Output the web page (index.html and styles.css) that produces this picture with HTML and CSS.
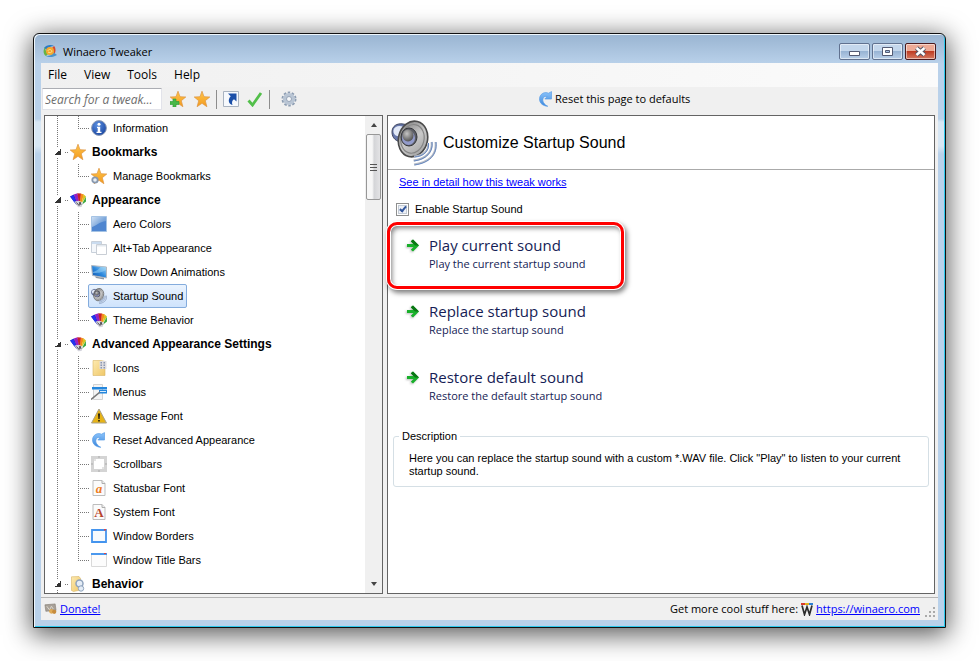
FILE: index.html
```html
<!DOCTYPE html>
<html lang="en">
<head>
  <meta charset="utf-8">
  <meta name="viewport" content="width=device-width, initial-scale=1">
  <title>Winaero Tweaker</title>
  <link rel="stylesheet" href="styles.css">
</head>
<body>

<!-- icon sprite -->
<svg class="sprite" width="0" height="0" aria-hidden="true">
  <defs>
    <linearGradient id="g-blue" x1="0" y1="0" x2="1" y2="1"><stop offset="0" stop-color="#d3e3f5"/><stop offset=".5" stop-color="#7fa9dc"/><stop offset="1" stop-color="#4a7fc8"/></linearGradient>
    <linearGradient id="g-star" x1="0" y1="0" x2="0" y2="1"><stop offset="0" stop-color="#ffc64a"/><stop offset="1" stop-color="#f39a1e"/></linearGradient>
    <radialGradient id="g-info" cx=".4" cy=".3" r=".8"><stop offset="0" stop-color="#5b8fe0"/><stop offset="1" stop-color="#123f9c"/></radialGradient>
    <linearGradient id="g-metal" x1="0" y1="0" x2="1" y2="1"><stop offset="0" stop-color="#777"/><stop offset=".5" stop-color="#c9c9c9"/><stop offset="1" stop-color="#9a9a9a"/></linearGradient>
    <radialGradient id="g-cone" cx=".4" cy=".35" r=".7"><stop offset="0" stop-color="#c5c5c5"/><stop offset="1" stop-color="#4d4d4d"/></radialGradient>
    <linearGradient id="g-arc" x1="0" y1="0" x2="0" y2="1"><stop offset="0" stop-color="#8cc4fb"/><stop offset="1" stop-color="#3a86dc"/></linearGradient>
    <linearGradient id="g-folder" x1="0" y1="0" x2="1" y2="1"><stop offset="0" stop-color="#fdeab0"/><stop offset="1" stop-color="#efc768"/></linearGradient>
    <linearGradient id="g-screen" x1="0" y1="1" x2="1" y2="0"><stop offset="0" stop-color="#0c4fa8"/><stop offset=".5" stop-color="#2e8ade"/><stop offset="1" stop-color="#b8e2f8"/></linearGradient>
  </defs>
  <symbol id="i-app" viewBox="0 0 16 14">
    <path d="M2 4C4 1 9 0 12 2c-3 0-6 1-7 4z" fill="#2c7cc4"/>
    <path d="M12 2c2 2 2 6 0 9 0-3-1-5-3-6z" fill="#d9482e"/>
    <path d="M15 11c-3 2-8 3-11 1 4 0 6-1 7-4z" fill="#4b93c9"/>
    <path d="M4 12C1 10 1 6 3 3c0 3 1 5 4 6z" fill="#66b345"/>
    <circle cx="8" cy="7" r="4" fill="#f4a72c"/>
    <path d="M6 7c0-2 3-2 4 0M10 7c0 2-3 2-4 1" fill="none" stroke="#fbe08c"/>
  </symbol>
  <symbol id="i-star" viewBox="0 0 16 16">
    <path d="M8 .2l2 5.500 5.800.3-4.500 3.700 1.600 6L8 12.300l-4.900 3.400 1.600-6L.2 6l5.800-.3z" fill="url(#g-star)" stroke="#dd9440" stroke-width=".7"/>
  </symbol>
  <symbol id="i-staradd" viewBox="0 0 16 16">
    <use href="#i-star"/>
    <path d="M3 8h3v2.500h3v3H6V16H3v-2.500H0v-3h3z" fill="#48b848" stroke="#2b9a35" stroke-width=".6"/>
  </symbol>
  <symbol id="i-stargear" viewBox="0 0 16 16">
    <use href="#i-star"/>
    <circle cx="4" cy="12" r="2.700" fill="#e8eef5" stroke="#8798ae" stroke-width="1.800"/>
  </symbol>
  <symbol id="i-shortcut" viewBox="0 0 16 16">
    <path d="M.5.5h15v15H.5z" fill="#f6f9fd" stroke="#a9b3c0"/>
    <path d="M5 2.500h8.500v8L11 8.200C9 9.500 8.500 11.500 9.500 14 5.500 13 4.500 8.500 7.700 5.200z" fill="#1b4fa8"/>
  </symbol>
  <symbol id="i-check" viewBox="0 0 16 16">
    <path d="M1.500 9.500L5.500 14 14 2" fill="none" stroke="#52bf4a" stroke-width="2.800"/>
  </symbol>
  <symbol id="i-gear" viewBox="0 0 16 16">
    <circle cx="8" cy="8" r="6.500" fill="none" stroke="#8d9db2" stroke-width="2" stroke-dasharray="2.500 1.580"/>
    <circle cx="8" cy="8" r="4.300" fill="none" stroke="#b9c5d4" stroke-width="3.600"/>
    <circle cx="8" cy="8" r="2.500" fill="#f6f8fa" stroke="#8292a8" stroke-width=".8"/>
  </symbol>
  <symbol id="i-reset" viewBox="0 0 16 16">
    <path d="M9.800 15.300C3.500 15 .5 10.500 1.800 6 3 2.300 7 .6 10.500 2.200L13.500.6V8H6.800l2.300-2.400C7 5 5.300 6 4.900 8c-.5 2.500 1 5.300 4.900 7.300z" fill="url(#g-arc)" stroke="#5a9de6" stroke-width=".7"/>
  </symbol>
  <symbol id="i-info" viewBox="0 0 16 16">
    <circle cx="8" cy="8" r="7.400" fill="url(#g-info)" stroke="#8f9cb5"/>
    <circle cx="8" cy="4.200" r="1.500" fill="#fff"/>
    <path d="M6 6.700h3.200v5H10.500V13h-5v-1.300h1.200V8H6z" fill="#fff"/>
  </symbol>
  <symbol id="i-swatch" viewBox="0 0 16 16">
    <path d="M0 4.500L4 2.500 8 12 6.500 13z" fill="#1420b0"/>
    <path d="M.3 4.500L3.500 3l2.500 5-1.500 2.500z" fill="#2233f0"/>
    <path d="M3.800 2.600L7.500 1.200l2 9.800-2 1.200z" fill="#9420c4"/>
    <path d="M7.300 1.200L11 1.500 10.500 11H9z" fill="#c9202c"/>
    <path d="M10.800 1.500l3 1L11.500 11H10z" fill="#f58b1c"/>
    <path d="M13.500 2.300L16 4.500l-4.500 7z" fill="#d8c520"/>
    <path d="M15.800 4.700l.2 4.800-4.500 3.500z" fill="#3aa83c"/>
    <path d="M4.500 9.500L9 8.800l4 2L11.500 15 8 15.200z" fill="#d4d4dc"/>
    <path d="M6.500 10.500l2.500 3 1-3.500 1 3" fill="none" stroke="#444" stroke-width=".9"/>
  </symbol>
  <symbol id="i-aero" viewBox="0 0 16 16">
    <path d="M.5.5h15v15H.5z" fill="url(#g-blue)" stroke="#a5c3e4"/>
    <path d="M1 11C5 10 8 6 15 5v10H1z" fill="#4f86d0"/>
  </symbol>
  <symbol id="i-alttab" viewBox="0 0 16 16">
    <path d="M.5 1.500h10v11H.5z" fill="#f4f7fb" stroke="#c8d0da"/><path d="M1 2h9v2H1z" fill="#cadcf0"/>
    <path d="M5.500 4.500h10v10h-10z" fill="#fff" stroke="#c9ced5"/><path d="M6 5h9v1.500H6z" fill="#e3e9ef"/>
  </symbol>
  <symbol id="i-screen" viewBox="0 0 16 16">
    <path d="M.5 1.500L15.500 3v11L1.500 11.500z" fill="url(#g-screen)" stroke="#b4b9c0"/>
    <path d="M4 12.500l9 1.500v1.500l-8-1.500z" fill="#8c96a2"/><path d="M2 8c4-1 7-4 8-5.500l5 .8V6C10 9 6 9 2 9z" fill="#9fd8f7" opacity=".5"/>
  </symbol>
  <symbol id="i-speaker" viewBox="0 0 46 46">
    <path d="M1 12C1 6 6 3 12 4l6 1-6 17C5 22 1 18 1 12z" fill="#6878ab" stroke="#3e4660"/>
    <path d="M2.500 10C4 6 8 5 13 7l-4 9C5 17 2 14 2.500 10z" fill="#e2e9f7"/>
    <ellipse cx="22" cy="19" rx="14.500" ry="18" fill="url(#g-metal)" stroke="#4a4a4a" stroke-width="1.600" transform="rotate(14 22 19)"/>
    <ellipse cx="21.500" cy="19" rx="11.500" ry="14.500" fill="none" stroke="#858585" stroke-width="1.200" transform="rotate(14 22 19)"/>
    <ellipse cx="18" cy="17" rx="8" ry="9" fill="#5d5f66" stroke="#33353b"/>
    <ellipse cx="17.500" cy="18" rx="6.500" ry="7" fill="#929bcb"/>
    <ellipse cx="17" cy="15.500" rx="5.500" ry="6" fill="url(#g-cone)"/>
    <path d="M37 23c1 8-5 13-14 13.500M40.500 22c1.500 10-6 17-18 18.500M44.500 22c1.500 13-7 20.500-21.500 22.500" fill="none" stroke="#b5bac4" stroke-width="2"/>
    <path d="M37.500 23c1 8-5 13.500-14 14M41 22c1.500 10-6 17.500-18 19M45 22c1.500 13-7 21-21.500 23" fill="none" stroke="#5a80c0" stroke-width=".9"/>
  </symbol>
  <symbol id="i-icons" viewBox="0 0 16 16">
    <path d="M2 .5h8l4 1v14H2z" fill="url(#g-folder)" stroke="#d8b566" stroke-width=".6"/>
    <path d="M8.500 1h7v8h-7z" fill="#dfdde0"/><path d="M9.500 2h1.500v1.500H9.500zM12.500 2H14v1.500h-1.500zM9.500 4.500h1.500V6H9.500zM12.500 4.500H14V6h-1.500zM9.500 7h1.500v1.500H9.500zM12.500 7H14v1.500h-1.500z" fill="#8a97b0"/>
  </symbol>
  <symbol id="i-menus" viewBox="0 0 16 16">
    <path d="M2.500.5h9v15h-9z" fill="#f4f4f4" stroke="#d3d3d3"/>
    <path d="M1 3h15v2.500H1zM8 6h8v3.500H8z" fill="#2587dd"/><path d="M9 7.500h6" stroke="#d8ebfb"/><path d="M0 15.500L9 8" stroke="#777" stroke-width="1.600"/>
  </symbol>
  <symbol id="i-warn" viewBox="0 0 16 16">
    <path d="M8 1L15.500 15H.5z" fill="#e6b317" stroke="#a8a08a" stroke-linejoin="round"/>
    <path d="M7 5.500h2L8.600 11H7.400zM7.200 12h1.600v1.600H7.200z" fill="#201c10"/>
  </symbol>
  <symbol id="i-scroll" viewBox="0 0 16 16">
    <path d="M1.500 1.500h13v13h-13z" fill="#fff" stroke="#d4d4d4" stroke-width="3"/>
    <path d="M3 3h2v2H3zM11 11h2v2h-2z" fill="#e3e3e3"/>
    <path d="M1 7v2M15 7v2M7 1h2M7 15h2" stroke="#aaa" fill="none"/>
  </symbol>
  <symbol id="i-page" viewBox="0 0 16 16">
    <path d="M2 .5h9l3 3v12H2z" fill="#fbfbfb" stroke="#bdbdbd"/><path d="M11 .5v3h3" fill="#eee" stroke="#adadad"/>
  </symbol>
  <symbol id="i-borders" viewBox="0 0 16 16">
    <path d="M1 2h14v12H1z" fill="#f7fafd" stroke="#4494ee" stroke-width="1.800"/><path d="M13 1h2v1.500h-2z" fill="#d44"/>
  </symbol>
  <symbol id="i-titlebar" viewBox="0 0 16 16">
    <path d="M.5 1.500h15v13H.5z" fill="#fcfcfc" stroke="#d9d9d9"/><path d="M0 1h16v2H0z" fill="#4a98ee"/><path d="M13 1h2v1h-2z" fill="#d44"/>
  </symbol>
  <symbol id="i-behavior" viewBox="0 0 16 16">
    <path d="M1.500.8L9 .5l1.500 2V14l-7 1.500-2-1z" fill="url(#g-folder)" stroke="#d8b566" stroke-width=".6"/>
    <circle cx="9.500" cy="7.500" r="3.500" fill="#e5edf6" stroke="#8fa3bd" stroke-width="1.500"/><circle cx="11" cy="12.500" r="2.700" fill="#e5edf6" stroke="#8fa3bd"/>
  </symbol>
  <symbol id="i-go" viewBox="0 0 14 14">
    <path d="M1 6h6.500L4.800 3.300 7 1.500 13 7.500l-6 6-2.200-1.800L7.500 9H1z" fill="#18b02a"/>
    <path d="M4.800 3.300L7 1.500l6 6H9z" fill="#0a7614"/>
  </symbol>
  <symbol id="i-donate" viewBox="0 0 14 12">
    <path d="M1 1.500l11-1 1 7-11 1z" fill="#a7a097" stroke="#7d766c" stroke-width=".6"/><path d="M3 3l3 4 2-4 2 3" fill="none" stroke="#ded9d0"/>
    <circle cx="8" cy="8.500" r="2.500" fill="#dfaa55"/><circle cx="11" cy="9" r="2.300" fill="#c78c3c"/>
  </symbol>
  <symbol id="i-w" viewBox="0 0 12 13">
    <path d="M0 0h4v2H0z" fill="#d93a2b"/><path d="M4 0h4v2H4z" fill="#e9b51b"/><path d="M8 0h4v2H8z" fill="#2a7fd3"/>
    <path d="M1 2.500l2.500 9L6 4l2.500 7.500 2.500-9" fill="none" stroke="#2c2c2c" stroke-width="1.700"/>
  </symbol>
</svg>

<div class="window">
  <header class="titlebar">
    <svg class="app-icon"><use href="#i-app"/></svg>
    <span class="caption">Winaero Tweaker</span>
    <button class="win-btn" type="button" aria-label="Minimize"><svg viewBox="0 0 29 15"><path d="M9.500 7.500h10v4h-10z" fill="#fff" stroke="#535a73"/></svg></button>
    <button class="win-btn" type="button" aria-label="Maximize"><svg viewBox="0 0 29 15"><path d="M9.500 3.500h10v8h-10z" fill="#fff" stroke="#535a73"/><path d="M12.500 6.500h4v2h-4z" fill="#a5c0df" stroke="#535a73"/></svg></button>
    <button class="win-btn close" type="button" aria-label="Close"><svg viewBox="0 0 29 15"><path d="M10.500 4l8 7M18.500 4l-8 7" stroke="#535666" stroke-width="4.500"/><path d="M10.500 4l8 7M18.500 4l-8 7" stroke="#fff" stroke-width="2.500"/></svg></button>
  </header>

  <div class="client">
    <nav class="menubar">
      <button type="button">File</button>
      <button type="button">View</button>
      <button type="button">Tools</button>
      <button type="button">Help</button>
    </nav>

    <div class="toolbar">
      <div class="tools">
        <input class="search" type="text" placeholder="Search for a tweak..." aria-label="Search for a tweak">
        <button type="button" aria-label="Add bookmark"><svg><use href="#i-staradd"/></svg></button>
        <button type="button" aria-label="Bookmarks"><svg><use href="#i-star"/></svg></button>
        <span class="sep"></span>
        <button type="button" aria-label="Create shortcut"><svg><use href="#i-shortcut"/></svg></button>
        <button type="button" aria-label="Apply"><svg><use href="#i-check"/></svg></button>
        <span class="sep"></span>
        <button class="options" type="button" aria-label="Options"><svg><use href="#i-gear"/></svg></button>
      </div>
      <button class="reset" type="button"><svg><use href="#i-reset"/></svg>Reset this page to defaults</button>
    </div>

    <div class="main">
      <div class="tree-pane">
        <ul class="tree" role="tree">
          <li>
            <ul>
              <li><a class="node"><svg><use href="#i-info"/></svg>Information</a></li>
            </ul>
          </li>
          <li>
            <div class="group"><span class="expander"></span><svg><use href="#i-star"/></svg>Bookmarks</div>
            <ul>
              <li><a class="node"><svg><use href="#i-stargear"/></svg>Manage Bookmarks</a></li>
            </ul>
          </li>
          <li>
            <div class="group"><span class="expander"></span><svg><use href="#i-swatch"/></svg>Appearance</div>
            <ul>
              <li><a class="node"><svg><use href="#i-aero"/></svg>Aero Colors</a></li>
              <li><a class="node"><svg><use href="#i-alttab"/></svg>Alt+Tab Appearance</a></li>
              <li><a class="node"><svg><use href="#i-screen"/></svg>Slow Down Animations</a></li>
              <li><a class="node selected"><svg><use href="#i-speaker"/></svg>Startup Sound</a></li>
              <li><a class="node"><svg><use href="#i-swatch"/></svg>Theme Behavior</a></li>
            </ul>
          </li>
          <li>
            <div class="group"><span class="expander"></span><svg><use href="#i-swatch"/></svg>Advanced Appearance Settings</div>
            <ul>
              <li><a class="node"><svg><use href="#i-icons"/></svg>Icons</a></li>
              <li><a class="node"><svg><use href="#i-menus"/></svg>Menus</a></li>
              <li><a class="node"><svg><use href="#i-warn"/></svg>Message Font</a></li>
              <li><a class="node"><svg><use href="#i-reset"/></svg>Reset Advanced Appearance</a></li>
              <li><a class="node"><svg><use href="#i-scroll"/></svg>Scrollbars</a></li>
              <li><a class="node"><svg viewBox="0 0 16 16"><use href="#i-page"/><text class="letter italic" x="8" y="13" text-anchor="middle">a</text></svg>Statusbar Font</a></li>
              <li><a class="node"><svg viewBox="0 0 16 16"><use href="#i-page"/><text class="letter" x="8" y="13" text-anchor="middle">A</text></svg>System Font</a></li>
              <li><a class="node"><svg><use href="#i-borders"/></svg>Window Borders</a></li>
              <li><a class="node"><svg><use href="#i-titlebar"/></svg>Window Title Bars</a></li>
            </ul>
          </li>
          <li>
            <div class="group"><span class="expander"></span><svg><use href="#i-behavior"/></svg>Behavior</div>
          </li>
        </ul>
        <div class="scrollbar">
          <span class="arrow up"></span>
          <span class="thumb"></span>
          <span class="arrow down"></span>
        </div>
      </div>

      <main class="page">
        <div class="page-head">
          <svg><use href="#i-speaker"/></svg>
          <h1>Customize Startup Sound</h1>
        </div>
        <p class="detail"><a href="#">See in detail how this tweak works</a></p>
        <label class="enable"><input type="checkbox" checked>Enable Startup Sound</label>
        <ul class="commands">
          <li>
            <button type="button"><svg><use href="#i-go"/></svg><span class="label">Play current sound</span><span class="note">Play the current startup sound</span></button>
            <span class="marker"></span>
          </li>
          <li>
            <button type="button"><svg><use href="#i-go"/></svg><span class="label">Replace startup sound</span><span class="note">Replace the startup sound</span></button>
          </li>
          <li>
            <button type="button"><svg><use href="#i-go"/></svg><span class="label">Restore default sound</span><span class="note">Restore the default startup sound</span></button>
          </li>
        </ul>
        <fieldset class="description">
          <legend>Description</legend>
          <p>Here you can replace the startup sound with a custom *.WAV file. Click "Play" to listen to your current startup sound.</p>
        </fieldset>
      </main>
    </div>

    <footer class="statusbar">
      <svg class="coin"><use href="#i-donate"/></svg>
      <a href="#">Donate!</a>
      <span class="more">Get more cool stuff here:</span>
      <svg class="w"><use href="#i-w"/></svg>
      <a href="#">https://winaero.com</a>
      <svg class="grip" viewBox="0 0 11 11"><path d="M8 0h2v2H8zM4 4h2v2H4zM8 4h2v2H8zM0 8h2v2H0zM4 8h2v2H4zM8 8h2v2H8z" fill="#aaa"/></svg>
    </footer>
  </div>
</div>

</body>
</html>
```

FILE: styles.css
```css
*,
*::before,
*::after {
  box-sizing: border-box;
}

body {
  margin: 0;
  padding: 33px;
  height: 100vh;
  display: flex;
  overflow: hidden;
  background: #fff;
  color: #000;
  font: 11px/16px "Open Sans", "Noto Sans", sans-serif;
}

ul {
  margin: 0;
  padding: 0;
  list-style: none;
}

button {
  margin: 0;
  padding: 0;
  border: 0;
  background: none;
  color: inherit;
  font: inherit;
}

a[href] {
  color: #00f;
}

svg {
  display: block;
  flex: none;
  width: 16px;
  height: 16px;
}

.sprite {
  position: absolute;
  width: 0;
  height: 0;
}

/* window frame */
.window {
  flex: 1;
  min-width: 0;
  display: flex;
  flex-direction: column;
  padding: 0 7px 7px;
  border: 1px solid #111;
  border-radius: 6px 6px 0 0;
  background: linear-gradient(#99b4d1, #b9d1ea 30px, #b9d1ea 85px, #d8e7f4 88px, #d8e7f4 112px, #b9d1ea 120px);
  box-shadow: inset 1px 1px #eef6fc, inset -1px -1px #2cc8ec, 0 5px 26px 2px rgba(0, 0, 0, 0.65);
}

.titlebar {
  display: flex;
  align-items: center;
  gap: 2px;
  height: 29px;
  padding: 5px 2px 0 1px;
}

.app-icon {
  height: 14px;
}

.caption {
  flex: 1;
  padding: 2px 0 0 3px;
}

.win-btn {
  width: 31px;
  height: 17px;
  border: 1px solid #60718f;
  border-radius: 2px;
  background: linear-gradient(#c4d7ec 45%, #98b4d4 50%, #b9cfe8);
  box-shadow: inset 0 0 0 1px rgba(255, 255, 255, 0.5);
}

.win-btn svg {
  width: 29px;
  height: 15px;
}

.win-btn.close {
  border-color: #4b1a1e;
  background: linear-gradient(#eeaa96 45%, #bf3d24 50%, #d57a62);
}

.client {
  flex: 1;
  min-height: 0;
  display: flex;
  flex-direction: column;
  background: #f0f0f0;
}

.menubar {
  display: flex;
  gap: 17px;
  height: 24px;
  padding: 0 7px;
  background: linear-gradient(90deg, #f0f0f0, #fbfbfb);
  font-size: 12px;
}

/* toolbar */
.toolbar {
  display: flex;
  height: 28px;
  padding-bottom: 4px;
}

.tools {
  flex: 0 0 346px;
  display: flex;
  align-items: center;
  gap: 8px;
  padding-left: 1px;
}

.search {
  width: 120px;
  height: 22px;
  padding: 0 2px;
  border: 1px solid #e2e3ea;
  border-top-color: #abadb3;
  border-radius: 1px;
  background: #fff;
  font: italic 12px "Open Sans", "Noto Sans", sans-serif;
}

.search::placeholder {
  color: #6d6d6d;
  opacity: 1;
}

.sep {
  width: 1px;
  height: 19px;
  margin: 0 -2px;
  background: #8d8d8d;
}

.options {
  margin-left: 5px;
}

.reset {
  display: flex;
  align-items: center;
  gap: 1px;
  margin-left: 151px;
}

.main {
  flex: 1;
  min-height: 0;
  display: flex;
  gap: 4px;
  padding: 0 3px;
}

/* tree */
.tree-pane {
  flex: 0 0 339px;
  display: flex;
  overflow: hidden;
  border: 1px solid #646464;
  background: #fff;
  font: 11px/24px "Liberation Sans", Arial, sans-serif;
}

.tree {
  flex: 1;
}

.tree > li {
  background: repeating-linear-gradient(#777 0 1px, transparent 1px 2px) 12px 0 / 1px 100% no-repeat;
}

.tree ul {
  padding-left: 33px;
}

.tree ul li {
  height: 24px;
  background:
    repeating-linear-gradient(#777 0 1px, transparent 1px 2px) 0 0 / 1px 100% no-repeat,
    repeating-linear-gradient(90deg, #777 0 1px, transparent 1px 2px) 0 12px / 11px 1px no-repeat;
}

.tree ul li:last-child {
  background-size: 1px 12px, 11px 1px;
}

.node {
  display: inline-flex;
  align-items: center;
  gap: 6px;
  height: 24px;
  margin-left: 10px;
  padding: 0 3px 0 2px;
  border: 1px solid transparent;
  border-radius: 2px;
}

.node.selected {
  border-color: #84acdd;
  background: linear-gradient(#eaf3fe, #cfe3fc);
}

.letter {
  fill: #b8452e;
  font: bold 13px "Liberation Serif", serif;
}

.letter.italic {
  fill: #ee7a1c;
  font-style: italic;
}

.group {
  display: flex;
  align-items: center;
  gap: 6px;
  height: 24px;
  padding-left: 9px;
  background: repeating-linear-gradient(90deg, #777 0 1px, transparent 1px 2px) 20px 12px / 4px 1px no-repeat;
  font-size: 12px;
  font-weight: bold;
}

.expander {
  width: 10px;
  height: 10px;
  background: linear-gradient(135deg, transparent 50%, #333 50%) 1px 2px / 6px 6px no-repeat #fff;
}

.scrollbar {
  width: 17px;
  display: flex;
  flex-direction: column;
  align-items: center;
  background: #f0f0f0;
}

.arrow {
  border: 3px solid transparent;
  margin: 4px 0;
}

.arrow.up {
  border-bottom: 4px solid #444;
  border-top-width: 4px;
  margin: 3px 0 4px;
}

.arrow.down {
  border-top: 4px solid #444;
  margin-top: auto;
}

.thumb {
  width: 15px;
  height: 66px;
  margin-top: 3px;
  border: 1px solid #979797;
  border-radius: 2px;
  background:
    repeating-linear-gradient(#555 0 1px, transparent 1px 3px) center / 7px 7px no-repeat,
    linear-gradient(90deg, #f7f7f7 40%, #d4d5d8 55%, #e3e3e5);
}

/* right page */
.page {
  flex: 1;
  min-width: 0;
  border: 1px solid #646464;
  background: #fff;
  font: 11px/14px "Liberation Sans", Arial, sans-serif;
}

.page-head {
  display: flex;
  align-items: center;
  gap: 6px;
  height: 54px;
  padding-left: 3px;
  border-bottom: 1px solid #aaa;
}

.page-head svg {
  width: 46px;
  height: 46px;
}

.page-head h1 {
  margin: 0;
  font-size: 16px;
  font-weight: normal;
}

.detail {
  margin: 5px 11px 13px;
}

.enable {
  display: flex;
  align-items: center;
  gap: 6px;
  width: max-content;
  margin: 0 8px 7px;
}

.enable input {
  appearance: none;
  width: 13px;
  height: 13px;
  margin: 0;
  border: 1px solid #8e8f8f;
  background: #eef1f6;
  box-shadow: inset 0 0 0 1px #fff, inset 0 0 0 2px #c3cbd5;
}

.enable input:checked::before {
  content: "";
  display: block;
  width: 4px;
  height: 7px;
  margin: 1px 4px;
  border: solid #31559b;
  border-width: 0 2px 2px 0;
  transform: rotate(40deg);
}

.commands li {
  position: relative;
}

.commands button {
  display: grid;
  grid-template-columns: 14px 1fr;
  grid-template-rows: 22px 16px;
  column-gap: 9px;
  align-items: center;
  width: 100%;
  height: 66px;
  padding: 11px 18px 17px;
  align-content: start;
  color: #151c55;
  text-align: left;
}

.commands svg {
  width: 14px;
  height: 14px;
  filter: drop-shadow(-1px 1px 1px #bbb);
}

.label {
  font: 15px/22px "Open Sans", "Noto Sans", sans-serif;
}

.note {
  grid-column: 2;
  font: 11px/16px "Open Sans", "Noto Sans", sans-serif;
}

.marker {
  position: absolute;
  left: -1px;
  top: -1px;
  width: 237px;
  height: 67px;
  border: 3px solid #f00;
  border-radius: 10px;
  box-shadow: 0 0 0 1px #fff, inset 0 0 0 1px #fff, 2px 3px 5px 1px rgba(0, 0, 0, 0.5), inset 2px 3px 5px rgba(0, 0, 0, 0.5);
  pointer-events: none;
}

.description {
  margin: 8px 5px 0;
  padding: 9px 15px 8px;
  border: 1px solid #d5dfe5;
  border-radius: 3px;
}

.description legend {
  margin-left: -10px;
  padding: 0 3px;
}

.description p {
  margin: 0;
  line-height: 13px;
}

.statusbar {
  display: flex;
  align-items: center;
  gap: 3px;
  height: 23px;
  margin-top: 3px;
  padding: 0 2px 0 3px;
  border-top: 1px solid #b5b5b5;
}

.coin {
  width: 13px;
  height: 12px;
}

.more {
  margin-left: auto;
}

.w {
  width: 12px;
  height: 13px;
}

.grip {
  width: 11px;
  height: 11px;
  margin: 7px 0 0 2px;
}
```
